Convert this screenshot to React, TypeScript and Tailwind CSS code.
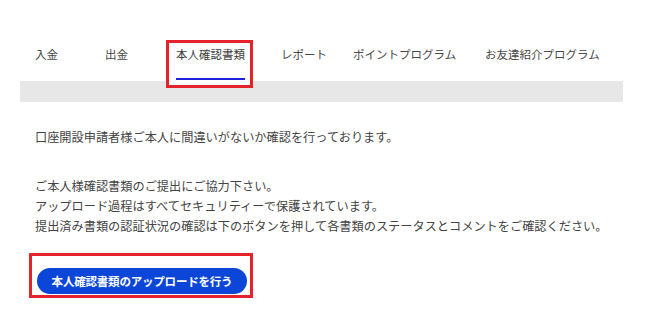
export default function App() {
	const lines = [
		"ご本人様確認書類のご提出にご協力下さい。",
		"アップロード過程はすべてセキュリティーで保護されています。",
		"提出済み書類の認証状況の確認は下のボタンを押して各書類のステータスとコメントをご確認ください。",
	];

	return (
		<div className="w-[660px] h-[311px] bg-white overflow-hidden font-['Noto_Sans_CJK_JP','Noto_Sans',sans-serif]">
			<div className="pl-5 pt-[40px] w-[623px]">
				{/* tabs */}
				<div className="flex items-start h-[41px] pl-[15px] text-[11.5px] leading-4 text-[#484848]">
					<div className="w-[70px] pt-[6px]">入金</div>
					<div className="w-[61px] pt-[6px]">出金</div>
					<div className="relative z-10 w-[87px] h-[48px] bg-white border-[3px] border-[#e4232b] pl-[7px] pr-[5px] pt-[3px]">
						<div className="text-[#3c3c3c] whitespace-nowrap">本人確認書類</div>
						<div className="mt-[16px] h-[2px] w-[69px] bg-[#2121dd]" />
					</div>
					<div className="w-[28px]" />
					<div className="w-[72px] pt-[6px]">レポート</div>
					<div className="w-[132px] pt-[6px]">ポイントプログラム</div>
					<div className="pt-[6px] whitespace-nowrap">お友達紹介プログラム</div>
				</div>
				<div className="h-[21px] bg-[#e7e7e7]" />

				{/* body */}
				<div className="pl-[15px] pt-[25px] text-[12.2px] leading-5 text-[#444]">
					<p>口座開設申請者様ご本人に間違いがないか確認を行っております。</p>
					<div className="mt-[29px]">
						{lines.map((l) => (
							<p key={l} className="whitespace-nowrap">
								{l}
							</p>
						))}
					</div>
				</div>

				<div className="ml-[9px] mt-[17px] w-[224px] h-[45px] border-[3px] border-[#e4232b] pl-[5px] pt-[11px]">
					<button
						type="button"
						className="w-[210px] h-[26px] rounded-full bg-[#0b46d8] text-white text-[11.5px] font-semibold leading-4 tracking-[-0.2px]"
					>
						本人確認書類のアップロードを行う
					</button>
				</div>
			</div>
		</div>
	);
}
